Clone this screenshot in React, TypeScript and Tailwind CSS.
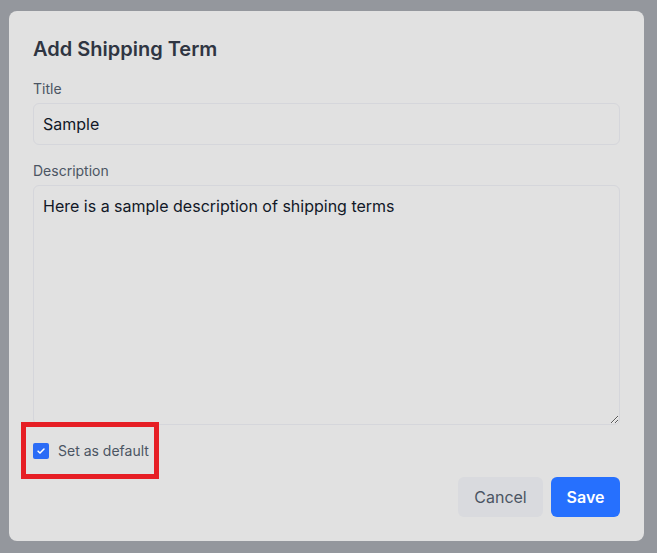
import React, { useState } from "react";

const font = { fontFamily: "Inter, 'Liberation Sans', sans-serif" };

const App = () => {
  const [title, setTitle] = useState("Sample");
  const [desc, setDesc] = useState("Here is a sample description of shipping terms");
  const [isDefault, setIsDefault] = useState(true);

  return (
    <div className="w-full h-[553px] bg-[#94979d] pt-[11px] pl-[9px]" style={font}>
      <div className="w-[635px] h-[530px] rounded-lg bg-[#e1e1e1] px-6 pt-[24px] pb-6 flex flex-col">
        <h2 className="text-xl font-semibold text-[#2f3542] leading-7 mb-[16px]">Add Shipping Term</h2>

        <label className="text-sm text-[#4b5563] leading-5 mb-1">Title</label>
        <input
          value={title}
          onChange={(e) => setTitle(e.target.value)}
          className="h-[42px] w-full rounded-md border border-[#d5d6db] bg-[#e1e1e1] px-[9px] text-base text-[#111827] outline-none"
        />

        <label className="text-sm text-[#4b5563] leading-5 mt-[16px] mb-1">Description</label>
        <textarea
          value={desc}
          onChange={(e) => setDesc(e.target.value)}
          className="h-[240px] w-full rounded-md border border-[#d5d6db] bg-[#e1e1e1] px-[9px] pt-[9px] text-base leading-[22px] text-[#111827] outline-none resize-y"
        />

        <div className="relative mt-[16px] flex items-center h-5 w-fit">
          <button
            onClick={() => setIsDefault(!isDefault)}
            className={`w-4 h-4 rounded-[2px] flex items-center justify-center ${
              isDefault ? "bg-[#2b6cf6]" : "bg-white border border-[#9ca3af]"
            }`}
          >
            {isDefault && (
              <svg width="10" height="10" viewBox="0 0 12 12" fill="none">
                <path d="M2.5 6.2l2.3 2.3L9.6 3.6" stroke="#fff" strokeWidth="1.8" strokeLinecap="round" strokeLinejoin="round" />
              </svg>
            )}
          </button>
          <span className="ml-[9px] text-sm text-[#4b5563]">Set as default</span>
          <div className="absolute left-[-12px] top-[-19px] w-[138px] h-[57px] border-[5px] border-[#e61e24] pointer-events-none" />
        </div>

        <div className="mt-auto flex justify-end gap-2">
          <button className="w-[85px] h-10 rounded-md bg-[#d9dade] text-base text-[#4b5563]">Cancel</button>
          <button className="w-[69px] h-10 rounded-md bg-[#2670fe] text-base font-semibold text-white">Save</button>
        </div>
      </div>
    </div>
  );
};

export default App;
